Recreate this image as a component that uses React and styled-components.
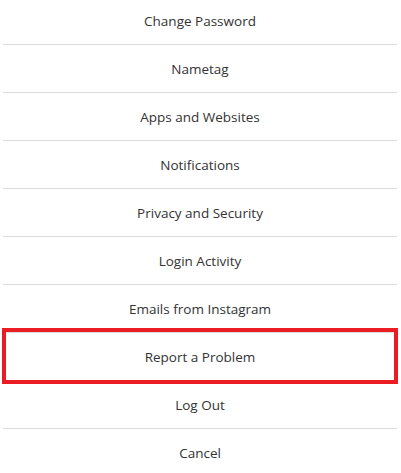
import React from "react";
import styled, { createGlobalStyle } from "styled-components";

const items = [
  "Change Password",
  "Nametag",
  "Apps and Websites",
  "Notifications",
  "Privacy and Security",
  "Login Activity",
  "Emails from Instagram",
  "Report a Problem",
  "Log Out",
  "Cancel",
];

const highlighted = "Report a Problem";

const App = () => {
  return (
    <>
      <GlobalStyle />
      <Menu>
        {items.map((label) => (
          <Row key={label}>
            {label}
            {label === highlighted && <Highlight />}
          </Row>
        ))}
      </Menu>
    </>
  );
};

const GlobalStyle = createGlobalStyle`
  body {
    margin: 0;
    background: #ffffff;
    overflow: hidden;
  }
`;

const Menu = styled.div`
  display: flex;
  flex-direction: column;
  margin: -3px 4px 0 3px;
  font-family: "Open Sans", "Noto Sans", sans-serif;
  font-size: 13.5px;
  color: #333333;
`;

const Row = styled.div`
  position: relative;
  height: 47px;
  display: flex;
  align-items: center;
  justify-content: center;
  border-bottom: 1px solid #dbdbdb;
  &:last-child {
    border-bottom: none;
  }
`;

const Highlight = styled.div`
  position: absolute;
  top: -5px;
  bottom: -4px;
  left: -1px;
  right: -1px;
  border: 4px solid #ea1d24;
  pointer-events: none;
`;

export default App;
